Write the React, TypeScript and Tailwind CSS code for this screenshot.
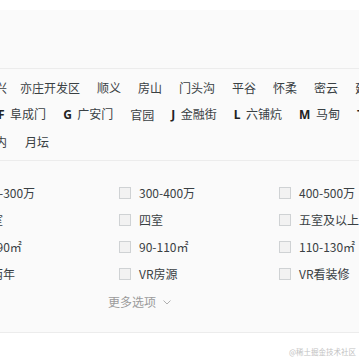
import React from "react";

const font = { fontFamily: '"Noto Sans CJK SC", "Noto Sans", sans-serif' };

function Letter({ c }: { c: string }) {
  return (
    <span className="mr-[5.5px] font-bold text-[#222] [font-family:'Noto_Sans',sans-serif]">
      {c}
    </span>
  );
}

function Check({ label }: { label: string }) {
  return (
    <div className="flex items-center">
      <span className="mr-[8px] h-[12px] w-[12px] shrink-0 border border-[#cfd2d4] bg-[#f2f2f2]" />
      <span className="whitespace-nowrap">{label}</span>
    </div>
  );
}

export default function App() {
  const checks = [
    ["200-300万", "300-400万", "400-500万"],
    ["三室", "四室", "五室及以上"],
    ["70-90㎡", "90-110㎡", "110-130㎡"],
    ["满两年", "VR房源", "VR看装修"],
  ];
  return (
    <div className="h-[359px] w-[359px] overflow-hidden bg-white text-[12px] text-[#394043]" style={font}>
      <div className="mt-[10px] border-b border-[#ececec] bg-[#fafafa]">
        <div className="h-[59px] border-b border-[#ececec]" />
        <div className="overflow-hidden border-b border-[#ececec] pt-[5px] pb-[5px]">
          <div className="ml-[-17px] flex h-[27px] items-center whitespace-nowrap">
            <span className="mr-[13px]">大兴</span>
            <span className="mr-[17px]">亦庄开发区</span>
            <span className="mr-[17px]">顺义</span>
            <span className="mr-[17px]">房山</span>
            <span className="mr-[17px]">门头沟</span>
            <span className="mr-[17px]">平谷</span>
            <span className="mr-[17px]">怀柔</span>
            <span className="mr-[17px]">密云</span>
            <span className="mr-[17px]">延庆</span>
          </div>
          <div className="ml-[-55px] flex h-[27px] items-center whitespace-nowrap">
            <span className="mr-[17px]">德胜门</span>
            <span className="mr-[17px]"><Letter c="F" />阜成门</span>
            <span className="mr-[17px]"><Letter c="G" />广安门</span>
            <span className="mr-[17px]">官园</span>
            <span className="mr-[17px]"><Letter c="J" />金融街</span>
            <span className="mr-[17px]"><Letter c="L" />六铺炕</span>
            <span className="mr-[17px]"><Letter c="M" />马甸</span>
            <span className="mr-[17px]"><Letter c="T" />陶然亭</span>
          </div>
          <div className="ml-[-41px] flex h-[27px] items-center whitespace-nowrap">
            <span className="mr-[18px]">西直门内</span>
            <span className="mr-[18px]">月坛</span>
          </div>
        </div>
        <div className="overflow-hidden pt-[18px] pb-[15px]">
          <div className="ml-[-41px]">
            {checks.map((row, i) => (
              <div key={i} className="grid h-[27px] grid-cols-[160px_160px_160px] items-center">
                {row.map((l) => (
                  <Check key={l} label={l} />
                ))}
              </div>
            ))}
          </div>
          <div className="flex h-[30px] items-center pl-[108px] text-[#9a9a9a]">
            <span>更多选项</span>
            <svg className="ml-[7px]" width="8" height="5" viewBox="0 0 8 5" fill="none">
              <path d="M0.5 0.5 L4 4 L7.5 0.5" stroke="#b0b0b0" strokeWidth="1" />
            </svg>
          </div>
        </div>
      </div>
      <div className="mt-[14px] pr-[3px] text-right text-[7.5px] leading-[10px] text-[#c2c2c2]">@稀土掘金技术社区</div>
    </div>
  );
}
